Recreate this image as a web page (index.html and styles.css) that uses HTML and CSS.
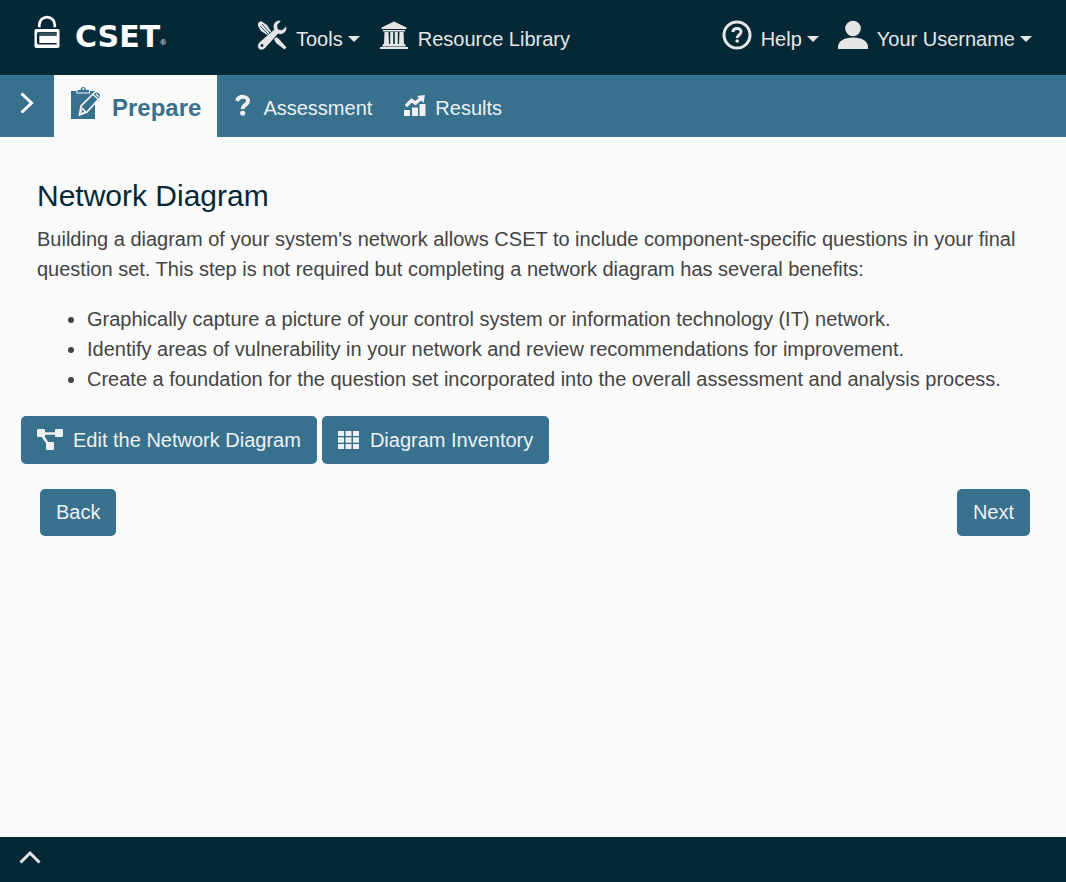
FILE: index.html
```html
<!DOCTYPE html>
<html lang="en">
<head>
<meta charset="utf-8">
<meta name="viewport" content="width=device-width, initial-scale=1">
<title>CSET - Network Diagram</title>
<link rel="stylesheet" href="styles.css">
</head>
<body>
<header class="topbar">
  <a class="brand" href="#">
    <svg class="brand-lock" viewBox="0 0 28 34" aria-hidden="true">
      <path d="M5.500 12v-2.500a8 8 0 0 1 16 0V12" fill="none" stroke="#fff" stroke-width="2.800"/>
      <rect x="0.500" y="14" width="26" height="19.500" rx="2" fill="#fff"/>
      <path d="M23.500 17H5q-2 0-2 2v9q0 2 2 2h18.500v-1.500H5.500V21h18v-1H5v-1.500h18.500Z" fill="#052836"/>
      <path d="M5 17.500h18.500v3H5Z" fill="#38525e"/>
    </svg>
    <span class="brand-name">CSET</span><span class="brand-mark">®</span>
  </a>
  <nav class="menu" aria-label="Main">
    <button class="menu-item" type="button">
      <svg class="icon-menu" viewBox="0 0 30 30" fill="currentColor" aria-hidden="true">
        <path d="M1 3 4 1 10 5 15 13 12 16 4 11 1 6Z"/>
        <path d="m5 4 8 9M3 6l8 8" fill="none" stroke="#052836" stroke-width=".8"/>
        <path d="m17 19 2-2 3 2 7.500 8.500-2 2L19 23Z"/>
        <path d="M24.500.5c-6-1-10 4-7.500 9L2 22.500c-4 5 1.500 10 6 6L21 14c5 2 10-3 8.500-8l-4.500 4-4-1-.5-4Z" stroke="#052836" stroke-width=".7"/>
        <circle cx="5" cy="25.500" r="1.400" fill="#052836"/>
      </svg>
      <span>Tools</span><i class="caret"></i>
    </button>
    <button class="menu-item" type="button">
      <svg class="icon-menu" viewBox="0 0 30 30" fill="currentColor" aria-hidden="true">
        <path d="m15 1.500 12.500 6V9h-25V7.500ZM4 10h22v1.500H4ZM5.500 12h4l.5 12H5Zm5.700 0h3v12h-3Zm4.600 0h3v12h-3Zm4.700 0h4l.5 12h-5ZM4 24h22l1 2.500H3ZM1 27h28v2H1Z"/>
      </svg>
      <span>Resource Library</span>
    </button>
  </nav>
  <nav class="menu" aria-label="Account">
    <button class="menu-item" type="button">
      <svg class="icon-menu" viewBox="0 0 30 30" fill="none" stroke="currentColor" aria-hidden="true">
        <circle cx="15" cy="15" r="13" stroke-width="3"/>
        <path d="M10.800 12c.5-5 8.500-4.500 8.200 0-.2 2.700-3.800 3-3.800 6" stroke-width="3"/>
        <circle cx="15.200" cy="21" r="1.800" fill="currentColor" stroke="none"/>
      </svg>
      <span>Help</span><i class="caret"></i>
    </button>
    <button class="menu-item" type="button">
      <svg class="icon-menu" viewBox="0 0 30 30" fill="currentColor" aria-hidden="true">
        <circle cx="15" cy="8.500" r="7.800"/>
        <path d="M0 29v-3c1-5 6-8.500 15-8.500S29 21 30 26v3Z"/>
      </svg>
      <span>Your Username</span><i class="caret"></i>
    </button>
  </nav>
</header>
<nav class="tabs" aria-label="Assessment steps">
  <button class="tab-toggle" type="button" aria-label="Expand navigation">
    <svg class="icon-chevron" viewBox="0 0 14 22" fill="none" stroke="currentColor" stroke-width="3" aria-hidden="true"><path d="m1.500 1.500 10 9.500-10 9.500"/></svg>
  </button>
  <a class="tab tab-active" href="#">
    <svg class="icon-prepare" viewBox="0 0 31 33" fill="currentColor" aria-hidden="true">
      <path d="M0 4h5.500v2.500h13.500V4H24v28H0Z"/>
      <path d="M6.500 5.500V3H9.500C10-1 14.500-1 15 3h3v2.500Z"/>
      <circle cx="12.300" cy="2" r="1" fill="#fafafa"/>
      <path d="m8.500 28 1.500-9L23.500 5.500c3-2.500 8 2 5.500 5L16 25Z" stroke="#fafafa" stroke-width="1.600"/>
      <path d="m22 7.500 5.500 5" fill="none" stroke="#fafafa" stroke-width="1.200"/>
      <path d="m11 20 4.500 4.500L9.500 27Z" fill="#fafafa"/>
      <path d="m11.500 22.500 2 2-3 1.500Z"/>
      <path d="m25 7 2.500 2.500" stroke="#fafafa" stroke-width="1.400"/>
    </svg>
    <span>Prepare</span>
  </a>
  <a class="tab tab-assessment" href="#">
    <svg class="icon-question" viewBox="0 0 19 22" fill="none" stroke="currentColor" aria-hidden="true">
      <path d="M4 7C6 1 15 2 15 7c0 4-5.300 3.700-5.300 8" stroke-width="4"/>
      <circle cx="9.700" cy="19" r="2.600" fill="currentColor" stroke="none"/>
    </svg>
    <span>Assessment</span>
  </a>
  <a class="tab" href="#">
    <svg class="icon-results" viewBox="0 0 22 22" fill="currentColor" aria-hidden="true">
      <path d="M0 16h6v6H0Zm8-2.500h6V22H8ZM15.500 10h6v12h-6Z"/>
      <path d="m2 12 5.500-5.500 4 2.500L17.500 4" fill="none" stroke="currentColor" stroke-width="3.500"/>
      <path d="M13 2 21 1l-1.500 8Z"/>
    </svg>
    <span>Results</span>
  </a>
</nav>
<main class="content">
  <section class="intro">
    <h1 class="title">Network Diagram</h1>
    <p class="lead">Building a diagram of your system's network allows CSET to include component-specific questions in your final question set. This step is not required but completing a network diagram has several benefits:</p>
    <ul class="benefits">
      <li>Graphically capture a picture of your control system or information technology (IT) network.</li>
      <li>Identify areas of vulnerability in your network and review recommendations for improvement.</li>
      <li>Create a foundation for the question set incorporated into the overall assessment and analysis process.</li>
    </ul>
  </section>
  <div class="actions">
    <button class="btn" type="button">
      <svg class="icon-diagram" viewBox="0 0 26 22" fill="currentColor" aria-hidden="true">
        <path d="M6 4.500h15M5 6l6 9" fill="none" stroke="currentColor" stroke-width="2.600"/>
        <rect width="8" height="8" rx="1"/><rect x="18" width="8" height="8" rx="1"/><rect x="9" y="13" width="8" height="8" rx="1"/>
      </svg>
      <span>Edit the Network Diagram</span>
    </button>
    <button class="btn" type="button">
      <svg class="icon-grid" viewBox="0 0 21 20" fill="currentColor" aria-hidden="true">
        <path d="M0 1h6v5H0Zm7.500 0h6v5h-6ZM15 1h6v5h-6ZM0 7.200h6v5.500H0Zm7.500 0h6v5.500h-6Zm7.500 0h6v5.500h-6ZM0 14h6v5H0Zm7.500 0h6v5h-6Zm7.500 0h6v5h-6Z"/>
      </svg>
      <span>Diagram Inventory</span>
    </button>
  </div>
  <div class="pager">
    <button class="btn btn-page" type="button">Back</button>
    <button class="btn btn-page" type="button">Next</button>
  </div>
</main>
<footer class="footer">
  <button class="footer-toggle" type="button" aria-label="Expand footer">
    <svg class="icon-up" viewBox="0 0 22 14" fill="none" stroke="currentColor" stroke-width="3" aria-hidden="true"><path d="m1.500 12.500 9.500-9.500 9.500 9.500"/></svg>
  </button>
</footer>
</body>
</html>
```
FILE: styles.css
```css
* { box-sizing: border-box; }

body {
  margin: 0;
  min-height: 100vh;
  display: flex;
  flex-direction: column;
  background: #fafafa;
  color: #444;
  font: 20px/30px "Liberation Sans", Arial, sans-serif;
}

button {
  margin: 0;
  padding: 0;
  border: 0;
  background: none;
  color: inherit;
  font: inherit;
  cursor: pointer;
}

a { color: inherit; text-decoration: none; }
svg { display: block; flex: none; }

.topbar {
  display: flex;
  align-items: flex-start;
  min-height: 75px;
  padding: 15px 34px 0;
  background: #052836;
  color: #e6e6e6;
}

.brand {
  display: flex;
  align-items: flex-end;
  margin-right: auto;
  min-width: 223px;
  color: #fff;
}
.brand + .menu { margin-right: auto; }
.brand { margin-right: 0; }
.brand-lock { width: 27px; height: 34px; margin-right: 14px; }
.brand-name { font: bold 30px/24px "DejaVu Sans", sans-serif; }
.brand-mark { font-size: 8px; line-height: 12px; }

.menu { display: flex; gap: 19px; padding-top: 5px; }
.menu-item { display: flex; align-items: flex-start; white-space: nowrap; }
.menu-item span { padding: 4px 0 0 9px; }
.icon-menu { width: 30px; height: 30px; }
.caret {
  margin: 16px 0 0 5px;
  border: 6px solid transparent;
  border-top-color: currentColor;
  border-bottom: 0;
}

.tabs {
  display: flex;
  min-height: 62px;
  background: #37718e;
  color: #f0f0f0;
}
.tab-toggle {
  display: flex;
  justify-content: center;
  width: 54px;
  padding-top: 17px;
  color: #fff;
}
.icon-chevron { width: 14px; height: 22px; }
.tab {
  display: flex;
  align-items: flex-start;
  gap: 9px;
  padding: 18px 16px 0;
}
.tab-assessment { gap: 11px; }
.tab-active {
  gap: 10px;
  padding: 12px 16px 0 17px;
  background: #fafafa;
  color: #37718e;
  font-size: 24px;
  font-weight: bold;
}
.tab-active span { padding-top: 6px; }
.icon-prepare { width: 31px; height: 33px; }
.icon-question { width: 19px; height: 22px; }
.icon-results { width: 22px; height: 22px; }
.icon-question, .icon-results { margin-top: 1px; }

.content { flex: 1; padding: 40px 36px 40px 21px; }
.intro { padding-left: 16px; }
.title {
  margin: 0 0 9px;
  color: #052836;
  font-size: 30px;
  font-weight: normal;
  line-height: 38px;
}
.lead { margin: 0 0 20px; }
.benefits { margin: 0 0 22px; padding-left: 50px; }

.actions { display: flex; flex-wrap: wrap; gap: 5px; }
.btn {
  display: flex;
  align-items: center;
  min-height: 48px;
  padding: 8px 16px;
  border-radius: 5px;
  background: #37718e;
  color: #f0f0f0;
}
.btn-page { min-height: 47px; padding-bottom: 9px; }
.icon-diagram { width: 26px; height: 22px; margin-right: 10px; }
.icon-grid { width: 21px; height: 20px; margin-right: 11px; }

.pager {
  display: flex;
  justify-content: space-between;
  margin-top: 25px;
  padding-left: 19px;
}

.footer { min-height: 45px; padding: 13px 19px; background: #052836; color: #e6e6e6; }
.footer-toggle { display: block; }
.icon-up { width: 22px; height: 14px; }
```
